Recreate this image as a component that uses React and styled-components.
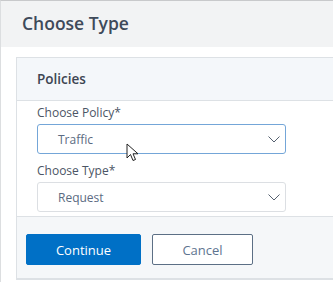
import styled, { createGlobalStyle } from "styled-components";

const Global = createGlobalStyle`
    body{
        margin:0;
        font-family:"Open Sans", "Liberation Sans", sans-serif;
        background:#ffffff;
    }
`

const fields = [
    { label: "Choose Policy*", value: "Traffic", active: true },
    { label: "Choose Type*", value: "Request", active: false }
];

function Chevron(){
    return <svg width="12" height="7" viewBox="0 0 12 7">
        <path d="M0.5 0.5 L6 6 L11.5 0.5" fill="none" stroke="#55606f" strokeWidth="1"/>
    </svg>
}

function Cursor(){
    return <svg width="14" height="20" viewBox="0 0 14 20">
        <path d="M1 1 L1 15 L4.5 11.5 L7 17.5 L9.5 16.5 L7 10.8 L12 10.8 Z" fill="#ffffff" stroke="#222" strokeWidth="1" strokeLinejoin="round"/>
    </svg>
}

export default function App(){
    return <>
    <Global/>
    <Page>
        <Header>
            <Title>Choose Type</Title>
        </Header>
        <Body>
            <Panel>
                <PanelHeader>Policies</PanelHeader>
                <PanelBody>
                    {fields.map((f) =>
                        <Field key={f.label}>
                            <Label>{f.label}</Label>
                            <Select active={f.active}>
                                <span>{f.value}</span>
                                <Chevron/>
                                {f.active && <Pointer><Cursor/></Pointer>}
                            </Select>
                        </Field>
                    )}
                </PanelBody>
                <Footer>
                    <Button primary>Continue</Button>
                    <Button>Cancel</Button>
                </Footer>
            </Panel>
        </Body>
    </Page>
    </>
}

const Page = styled.div`
    width:332px;
    height:281px;
    border-top:1px solid #c8c9cb;
    border-left:1px solid #dcdee0;
    overflow:hidden;
    display:flex;
    flex-direction:column;
`

const Header = styled.div`
    height:46px;
    background:#f2f3f4;
    display:flex;
    align-items:center;
    padding-left:21px;
    flex-shrink:0;
`

const Title = styled.div`
    font-size:17.5px;
    font-weight:600;
    color:#3e4a5a;
    margin-top:-2px;
`

const Body = styled.div`
    padding:10px 0 0 15px;
`

const Panel = styled.div`
    width:340px;
    border:1px solid #dde1e5;
    border-right:none;
`

const PanelHeader = styled.div`
    height:42px;
    background:#f4f7fa;
    border-bottom:1px solid #dde1e5;
    display:flex;
    align-items:center;
    padding-left:20px;
    font-size:13.5px;
    font-weight:600;
    color:#3d4552;
`

const PanelBody = styled.div`
    padding:3px 0 4px 20px;
    display:flex;
    flex-direction:column;
    gap:8px;
`

const Field = styled.div`
    display:flex;
    flex-direction:column;
    gap:2px;
`

const Label = styled.div`
    font-size:12px;
    color:#4b5565;
    line-height:18px;
`

const Select = styled.div`
    position:relative;
    width:249px;
    height:30px;
    box-sizing:border-box;
    border:1px solid ${props => props.active ? "#74a6d8" : "#dcdfe3"};
    border-radius:3px;
    display:flex;
    align-items:center;
    justify-content:space-between;
    padding:0 5px 0 20px;
    font-size:12px;
    color:#5b6b82;
`

const Pointer = styled.div`
    position:absolute;
    left:88px;
    top:18px;
`

const Footer = styled.div`
    border-top:1px solid #dde1e5;
    border-bottom:1px solid #dde1e5;
    background:#f5f7f9;
    height:63px;
    box-sizing:border-box;
    padding:17px 9px 0 9px;
    display:flex;
    gap:11px;
    align-items:flex-start;
`

const Button = styled.button`
    width:${props => props.primary ? "115px" : "101px"};
    height:31px;
    border-radius:2px;
    border:1px solid ${props => props.primary ? "#0070c6" : "#5c6f85"};
    background:${props => props.primary ? "#0070c6" : "#ffffff"};
    color:${props => props.primary ? "#ffffff" : "#5e7490"};
    font-family:"Open Sans", "Liberation Sans", sans-serif;
    font-size:13px;
    padding:0;
`
